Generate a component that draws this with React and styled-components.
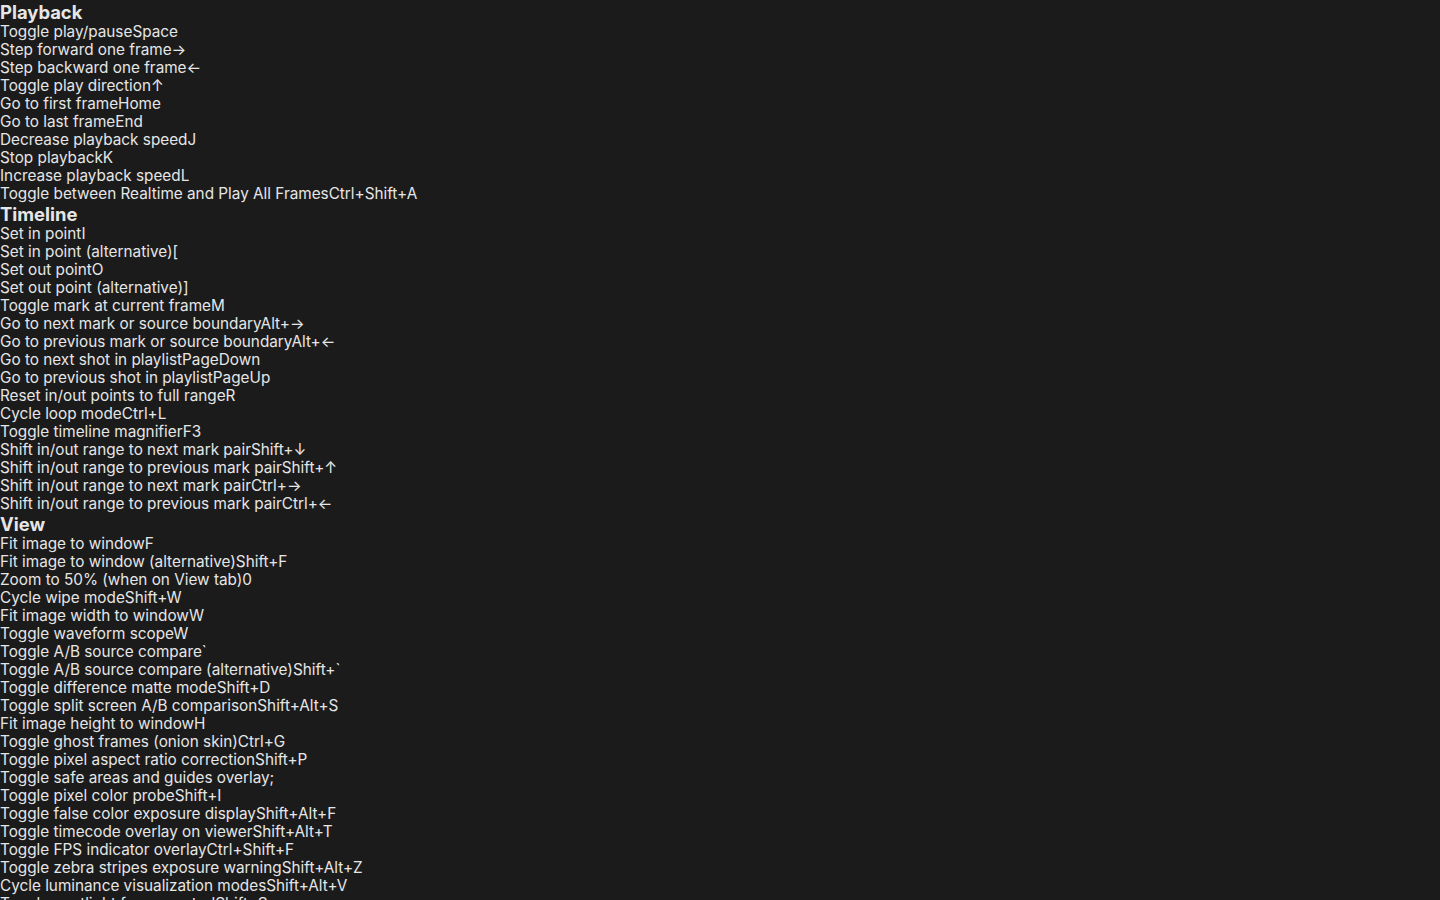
import styled, { createGlobalStyle } from "styled-components";

const GlobalStyle = createGlobalStyle`
  html, body {
    margin: 0;
    padding: 0;
    background: #1b1b1b;
    overflow: hidden;
  }
  body {
    font-family: Inter, "Noto Sans", sans-serif;
    color: #e6e6e6;
  }
`;

const sections = [
  {
    title: "Playback",
    items: [
      ["Toggle play/pause", "Space"],
      ["Step forward one frame", "→"],
      ["Step backward one frame", "←"],
      ["Toggle play direction", "↑"],
      ["Go to first frame", "Home"],
      ["Go to last frame", "End"],
      ["Decrease playback speed", "J"],
      ["Stop playback", "K"],
      ["Increase playback speed", "L"],
      ["Toggle between Realtime and Play All Frames", "Ctrl+Shift+A"],
    ],
  },
  {
    title: "Timeline",
    items: [
      ["Set in point", "I"],
      ["Set in point (alternative)", "["],
      ["Set out point", "O"],
      ["Set out point (alternative)", "]"],
      ["Toggle mark at current frame", "M"],
      ["Go to next mark or source boundary", "Alt+→"],
      ["Go to previous mark or source boundary", "Alt+←"],
      ["Go to next shot in playlist", "PageDown"],
      ["Go to previous shot in playlist", "PageUp"],
      ["Reset in/out points to full range", "R"],
      ["Cycle loop mode", "Ctrl+L"],
      ["Toggle timeline magnifier", "F3"],
      ["Shift in/out range to next mark pair", "Shift+↓"],
      ["Shift in/out range to previous mark pair", "Shift+↑"],
      ["Shift in/out range to next mark pair", "Ctrl+→"],
      ["Shift in/out range to previous mark pair", "Ctrl+←"],
    ],
  },
  {
    title: "View",
    items: [
      ["Fit image to window", "F"],
      ["Fit image to window (alternative)", "Shift+F"],
      ["Zoom to 50% (when on View tab)", "0"],
      ["Cycle wipe mode", "Shift+W"],
      ["Fit image width to window", "W"],
      ["Toggle waveform scope", "W"],
      ["Toggle A/B source compare", "`"],
      ["Toggle A/B source compare (alternative)", "Shift+`"],
      ["Toggle difference matte mode", "Shift+D"],
      ["Toggle split screen A/B comparison", "Shift+Alt+S"],
      ["Fit image height to window", "H"],
      ["Toggle ghost frames (onion skin)", "Ctrl+G"],
      ["Toggle pixel aspect ratio correction", "Shift+P"],
      ["Toggle safe areas and guides overlay", ";"],
      ["Toggle pixel color probe", "Shift+I"],
      ["Toggle false color exposure display", "Shift+Alt+F"],
      ["Toggle timecode overlay on viewer", "Shift+Alt+T"],
      ["Toggle FPS indicator overlay", "Ctrl+Shift+F"],
      ["Toggle zebra stripes exposure warning", "Shift+Alt+Z"],
      ["Cycle luminance visualization modes", "Shift+Alt+V"],
      ["Toggle spotlight focus control", "Shift+S"],
    ],
  },
];

const App = () => {
  return (
    <Page>
      <GlobalStyle />
      {sections.map((section) => (
        <Section key={section.title}>
          <Heading>{section.title}</Heading>
          {section.items.map(([label, key], i) => (
            <Row key={i}>
              <span>{label}</span>
              <Key>{key}</Key>
            </Row>
          ))}
        </Section>
      ))}
    </Page>
  );
};

const Page = styled.div`
  display: flex;
  flex-direction: column;
`;

const Section = styled.section`
  display: flex;
  flex-direction: column;
`;

const Heading = styled.h2`
  margin: 0;
  font-size: 18.4px;
  line-height: 22px;
  font-weight: 700;
  color: #e6e6e6;
  padding-top: 1px;
  height: 22px;
  box-sizing: border-box;
`;

const Row = styled.div`
  font-size: 15.3px;
  line-height: 18px;
  white-space: nowrap;
  transform: translateY(1px);
`;

const Key = styled.kbd`
  font-family: inherit;
  font-size: inherit;
`;

export default App;
